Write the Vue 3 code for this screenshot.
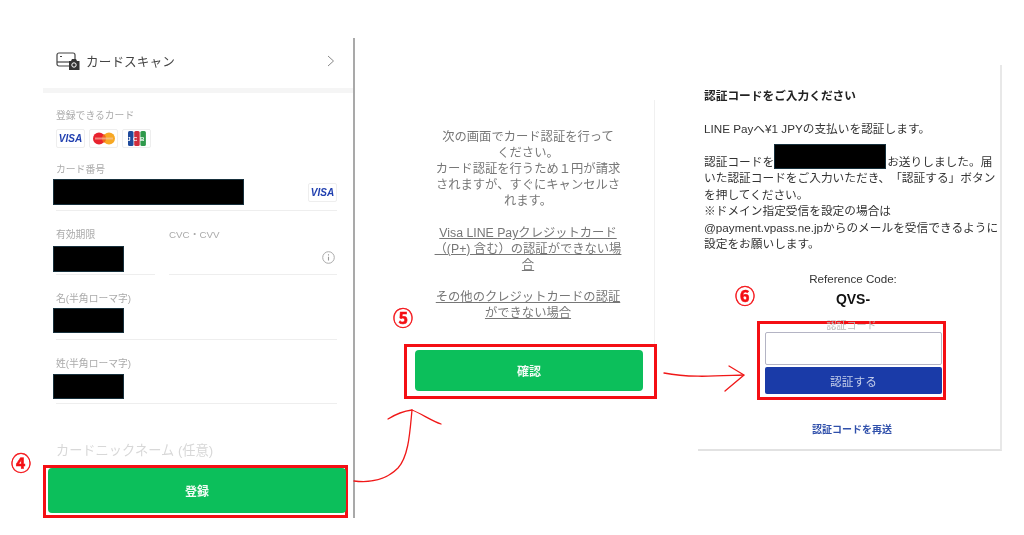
<template>
  <main class="page">
    <section class="panel-card">
      <div class="scan-row">
        <svg class="scan-icon" width="25" height="18" viewBox="0 0 25 18">
          <rect x="1" y="1" width="18" height="13" rx="2" fill="none" stroke="#444" stroke-width="1.2" />
          <path d="M1 10h12" stroke="#444" stroke-width="1.2" />
          <path d="M4 4.500h2" stroke="#444" stroke-width="1.2" />
          <path d="M13 9h2l1-2h4l1 2h2.500v9H13z" fill="#333" />
          <circle cx="18" cy="13" r="2.200" fill="none" stroke="#fff" stroke-width="1" />
        </svg>
        <span class="scan-text">カードスキャン</span>
        <svg class="chevron" width="8" height="12" viewBox="0 0 8 12">
          <path d="M1 1l5.500 5L1 11" fill="none" stroke="#888" stroke-width="1" />
        </svg>
      </div>
      <div class="band"></div>

      <div class="form">
        <div class="label first-label">登録できるカード</div>
        <div class="brands">
          <span class="brand"><span class="visa">VISA</span></span>
          <span class="brand">
            <svg width="24" height="13" viewBox="0 0 24 13">
              <circle cx="7" cy="6.500" r="6" fill="#e8222e" />
              <circle cx="17" cy="6.500" r="6" fill="#f7a823" />
              <path d="M12 2a6 6 0 0 1 0 9a6 6 0 0 1 0-9z" fill="#f0641e" />
              <rect x="3" y="5.500" width="18" height="2" fill="#f6c9b0" opacity="0.6" />
            </svg>
          </span>
          <span class="brand">
            <svg width="18" height="15" viewBox="0 0 18 15">
              <rect x="0" y="0" width="5.500" height="15" rx="1.500" fill="#1f4a9c" />
              <rect x="6.200" y="0" width="5.500" height="15" rx="1.500" fill="#cf2d3c" />
              <rect x="12.400" y="0" width="5.500" height="15" rx="1.500" fill="#2f9a4c" />
              <text x="9" y="10" text-anchor="middle" font-size="6" font-weight="700" letter-spacing="2.500" fill="#fff" font-family="Liberation Sans">JCB</text>
            </svg>
          </span>
        </div>

        <div class="field card-field">
          <div class="label">カード番号</div>
          <div class="value-row tall">
            <span class="mask wide"></span>
            <span class="brand small"><span class="visa">VISA</span></span>
          </div>
        </div>

        <div class="two-col">
          <div class="field expiry">
            <div class="label">有効期限</div>
            <div class="value-row gap">
              <span class="mask short"></span>
            </div>
          </div>
          <div class="field cvc">
            <div class="label">CVC・CVV</div>
            <div class="value-row gap">
              <svg class="info" width="13" height="13" viewBox="0 0 13 13">
                <circle cx="6.500" cy="6.500" r="5.800" fill="none" stroke="#aaa" stroke-width="1" />
                <path d="M6.500 5.800v3.800M6.500 3.200v1.200" stroke="#999" stroke-width="1.100" />
              </svg>
            </div>
          </div>
        </div>

        <div class="field name-field">
          <div class="label">名(半角ローマ字)</div>
          <div class="value-row name-row">
            <span class="mask short name-mask"></span>
          </div>
        </div>

        <div class="field name-field">
          <div class="label">姓(半角ローマ字)</div>
          <div class="value-row name-row last">
            <span class="mask short name-mask"></span>
          </div>
        </div>

        <div class="nickname">カードニックネーム (任意)</div>
      </div>

      <div class="red-box box-four">
        <button class="green-btn tall-btn">登録</button>
      </div>
    </section>

    <section class="panel-confirm">
      <div class="confirm-body">
        <p class="confirm-text">次の画面でカード認証を行って<br />ください。<br />カード認証を行うため１円が請求<br />されますが、すぐにキャンセルさ<br />れます。</p>
        <p class="confirm-link">Visa LINE Payクレジットカード<br />（(P+) 含む）の認証ができない場<br />合</p>
        <p class="confirm-link">その他のクレジットカードの認証<br />ができない場合</p>
      </div>
      <div class="red-box box-five">
        <button class="green-btn">確認</button>
      </div>
    </section>

    <section class="panel-code">
      <h2 class="code-title">認証コードをご入力ください</h2>
      <p class="code-line">LINE Payへ¥1 JPYの支払いを認証します。</p>
      <p class="code-para">認証コードを<span class="mask inline-mask"></span>お送りしました。届<br />いた認証コードをご入力いただき、「認証する」ボタン<br />を押してください。<br />※ドメイン指定受信を設定の場合は<br />@payment.vpass.ne.jpからのメールを受信できるように<br />設定をお願いします。</p>
      <div class="ref-label">Reference Code:</div>
      <div class="ref-code">QVS-</div>
      <div class="red-box box-six">
        <div class="code-label">認証コード</div>
        <div class="code-input"></div>
        <button class="blue-btn">認証する</button>
      </div>
      <div class="resend">認証コードを再送</div>
    </section>

    <span class="step step-four">④</span>
    <span class="step step-five">⑤</span>
    <span class="step step-six">⑥</span>

    <svg class="arrows" width="1024" height="535" viewBox="0 0 1024 535">
      <g fill="none" stroke="#f01818" stroke-width="1.300" stroke-linecap="round">
        <path d="M354 481C372 483 386 480 398 468C409 456 410 430 412 410" />
        <path d="M388 419C396 414 404 411 412 410C422 414 432 421 441 424" />
        <path d="M664 373C690 378 716 376 743 375" />
        <path d="M729 366L744 375L725 391" />
      </g>
    </svg>
  </main>
</template>

<script setup>
</script>

<style>
html,
body {
  margin: 0;
  background: #fff;
}
</style>

<style scoped>
.page {
  position: relative;
  width: 1024px;
  height: 535px;
  overflow: hidden;
  display: flex;
  align-items: flex-start;
  background: #fff;
  font-family: "Liberation Sans", "Noto Sans CJK JP", sans-serif;
  text-spacing-trim: space-all;
  /* the source image is a soft, upscaled screenshot */
  filter: blur(0.4px);
}

/* --- card form --- */
.panel-card {
  box-sizing: border-box;
  width: 312px;
  height: 480px;
  margin: 38px 0 0 43px;
  border-right: 2px solid #a9a9a9;
}

.scan-row {
  box-sizing: border-box;
  display: flex;
  align-items: center;
  height: 50px;
  padding: 0 16px 5px 13px;
}

.scan-text {
  margin-left: 5px;
  font-size: 12.600px;
  letter-spacing: 0.100px;
  color: #444;
}

.chevron {
  margin-left: auto;
  margin-right: 2px;
}

.band {
  height: 5px;
  background: #f5f5f5;
}

.form {
  padding: 0 16px 0 13px;
}

.label {
  height: 14px;
  font-size: 9.800px;
  line-height: 16px;
  color: #aaa;
  white-space: nowrap;
}

.first-label {
  padding-top: 15px;
}

.brands {
  display: flex;
  gap: 4px;
  margin-top: 7px;
}

.brand {
  display: flex;
  align-items: center;
  justify-content: center;
  box-sizing: border-box;
  width: 29px;
  height: 19px;
  border: 1px solid #eee;
  border-radius: 2px;
}

.brand.small {
  height: 19px;
  margin-left: auto;
  margin-top: 4px;
}

.visa {
  font-size: 10px;
  font-weight: 700;
  font-style: italic;
  color: #2140b0;
}

.field {
  min-width: 0;
}

.card-field {
  margin-top: 14px;
}

.value-row {
  display: flex;
  border-bottom: 1px solid #eee;
}

.tall {
  height: 31px;
  margin-top: 3px;
}

.gap {
  height: 28px;
  margin-top: 5px;
}

.name-row {
  height: 31px;
  margin-top: 3px;
}

.name-row.last {
  height: 29px;
  margin-top: 4px;
}

.two-col {
  display: flex;
  gap: 14px;
  margin-top: 16px;
}

.expiry {
  width: 99px;
}

.cvc {
  flex: 1;
}

.cvc .value-row {
  justify-content: flex-end;
  align-items: flex-start;
}

.info {
  margin-top: 5px;
  margin-right: 2px;
}

.name-field {
  margin-top: 16px;
}

.mask {
  display: block;
  box-sizing: border-box;
  border: 1px solid #17303c;
  background: #000;
}

.wide {
  width: 191px;
  height: 26px;
  margin-left: -3px;
}

.short {
  width: 71px;
  height: 26px;
  margin-left: -3px;
}

.name-mask {
  height: 25px;
}

.nickname {
  margin-top: 38px;
  font-size: 13.200px;
  line-height: 18px;
  color: #d8d8d8;
  white-space: nowrap;
}

.red-box {
  box-sizing: border-box;
  border: 3px solid #f40f14;
  background: #fff;
}

.box-four {
  width: 305px;
  height: 53px;
  margin-top: 5px;
  padding: 0 0 0 2px;
}

.green-btn {
  display: block;
  width: 228px;
  height: 41px;
  border: 0;
  border-radius: 4px;
  background: #0cbf5b;
  color: #f2fbf5;
  font-family: inherit;
  font-size: 12px;
  font-weight: 700;
}

.tall-btn {
  width: 298px;
  height: 45px;
}

/* --- confirm --- */
.panel-confirm {
  width: 253px;
  margin: 100px 0 0 49px;
}

.confirm-body {
  box-sizing: border-box;
  width: 251px;
  height: 244px;
  padding: 29px 2px 0 0;
  border-right: 1px solid #f0f0f0;
  text-align: center;
  font-size: 12.300px;
  line-height: 16px;
  color: #777;
}

.confirm-text,
.confirm-link {
  margin: 0;
  white-space: nowrap;
}

.confirm-link {
  margin-top: 16px;
  text-decoration: underline;
}

.box-five {
  height: 55px;
  padding: 3px 0 0 8px;
}

/* --- code entry --- */
.panel-code {
  box-sizing: border-box;
  width: 304px;
  height: 386px;
  margin: 65px 0 0 41px;
  padding: 23px 0 0 6px;
  border-right: 2px solid #e8e8e8;
  border-bottom: 2px solid #e2e2e2;
  color: #333;
}

.code-title {
  margin: 0;
  font-size: 11.700px;
  font-weight: 700;
  line-height: 16px;
  color: #222;
}

.code-line {
  margin: 17px 0 0;
  font-size: 11.700px;
  line-height: 16px;
}

.code-para {
  margin: 17px 0 0;
  font-size: 11.700px;
  line-height: 16.400px;
  white-space: nowrap;
}

.inline-mask {
  display: inline-block;
  width: 112px;
  height: 25px;
  margin: -12px 1px -6px 0;
  vertical-align: 3px;
}

.ref-label {
  margin-top: 20px;
  padding-left: 2px;
  text-align: center;
  font-size: 11.600px;
  line-height: 14px;
  color: #333;
}

.ref-code {
  margin-top: 4px;
  padding-left: 2px;
  text-align: center;
  font-size: 14px;
  font-weight: 700;
  line-height: 18px;
  color: #111;
}

.box-six {
  width: 189px;
  height: 79px;
  margin: 13px 0 0 53px;
  padding: 0 5px;
  background: transparent;
}

.code-label {
  height: 8px;
  margin-top: -3px;
  text-align: center;
  font-size: 10px;
  line-height: 10px;
  color: #bbb;
}

.code-input {
  box-sizing: border-box;
  width: 177px;
  height: 33px;
  margin-top: 3px;
  border: 1px solid #b4b4c4;
  border-radius: 2px;
}

.blue-btn {
  display: block;
  width: 177px;
  height: 27px;
  margin-top: 2px;
  border: 0;
  border-radius: 2px;
  background: #1a3ba8;
  color: #c3cdea;
  font-family: inherit;
  font-size: 11.700px;
}

.resend {
  margin-top: 23px;
  text-align: center;
  font-size: 10px;
  font-weight: 700;
  line-height: 14px;
  color: #3050ab;
}

/* --- annotations --- */
.step {
  position: absolute;
  width: 22px;
  font-family: "Noto Sans CJK JP", sans-serif;
  font-size: 20px;
  font-weight: 700;
  line-height: 24px;
  text-align: center;
  color: #f40f14;
  -webkit-text-stroke: 0.5px #f40f14;
}

.step-four {
  left: 10px;
  top: 451px;
}

.step-five {
  left: 392px;
  top: 306px;
}

.step-six {
  left: 734px;
  top: 284px;
}

.arrows {
  position: absolute;
  left: 0;
  top: 0;
  pointer-events: none;
}
</style>
